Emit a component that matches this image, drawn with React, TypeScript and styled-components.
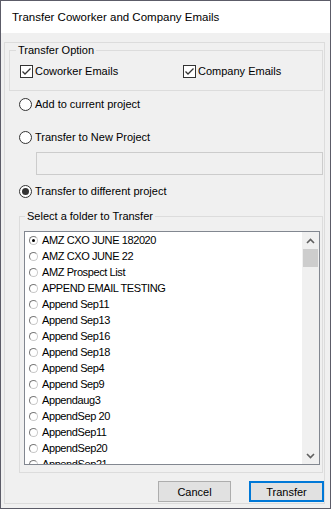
import styled, { createGlobalStyle } from "styled-components"

const folders = [
	"AMZ CXO JUNE 182020",
	"AMZ CXO JUNE 22",
	"AMZ Prospect List",
	"APPEND EMAIL TESTING",
	"Append Sep11",
	"Append Sep13",
	"Append Sep16",
	"Append Sep18",
	"Append Sep4",
	"Append Sep9",
	"Appendaug3",
	"AppendSep 20",
	"AppendSep11",
	"AppendSep20",
	"AppendSep21",
]

const CheckMark = () => (
	<svg width="11" height="11" viewBox="0 0 11 11">
		<path d="M1.5 5.5 L4 8 L9.5 2.5" fill="none" stroke="#333" strokeWidth="1.3" />
	</svg>
)

const Chevron = ({ down }: { down?: boolean }) => (
	<svg width="9" height="6" viewBox="0 0 9 6">
		<path
			d={down ? "M1 1 L4.5 4.5 L8 1" : "M1 5 L4.5 1.5 L8 5"}
			fill="none"
			stroke="#606060"
			strokeWidth="1.6"
		/>
	</svg>
)

export default function App() {
	return (
		<>
			<GlobalStyle />
			<Window>
				<TitleBar>Transfer Coworker and Company Emails</TitleBar>
				<Body>
					<Panel>
						<OptionGroup>
							<Legend $inset={6}>Transfer Option</Legend>
							<CheckRow>
								<CheckItem $width={163}>
									<CheckBox>
										<CheckMark />
									</CheckBox>
									<Label>Coworker Emails</Label>
								</CheckItem>
								<CheckItem>
									<CheckBox>
										<CheckMark />
									</CheckBox>
									<Label>Company Emails</Label>
								</CheckItem>
							</CheckRow>
						</OptionGroup>

						<RadioRow $top={7}>
							<RadioCircle />
							<Label>Add to current project</Label>
						</RadioRow>
						<RadioRow $top={20}>
							<RadioCircle />
							<Label>Transfer to New Project</Label>
						</RadioRow>
						<ProjectInput disabled />
						<RadioRow $top={10}>
							<RadioCircle $checked />
							<Label>Transfer to different project</Label>
						</RadioRow>

						<FolderGroup>
							<Legend $inset={5}>Select a folder to Transfer</Legend>
							<ListBox>
								<ListItems>
									{folders.map((name, i) => (
										<ListRow key={name}>
											<ItemRadio $checked={i === 0} />
											<ItemText>{name}</ItemText>
										</ListRow>
									))}
								</ListItems>
								<ScrollBar>
									<ScrollArrow>
										<Chevron />
									</ScrollArrow>
									<Thumb />
									<Track />
									<ScrollArrow>
										<Chevron down />
									</ScrollArrow>
								</ScrollBar>
							</ListBox>
						</FolderGroup>

						<ButtonRow>
							<Button $width={73}>Cancel</Button>
							<Button $width={75} $primary>
								Transfer
							</Button>
						</ButtonRow>
					</Panel>
				</Body>
			</Window>
		</>
	)
}

const GlobalStyle = createGlobalStyle`
	html, body {
		margin: 0;
		padding: 0;
		background: #ffffff;
	}
	* {
		box-sizing: border-box;
	}
`

const Window = styled.div`
	width: 331px;
	border: 1px solid #5c5c68;
	background: #f0f0f0;
	font-family: "Liberation Sans", Arial, sans-serif;
	font-size: 11px;
	color: #000;
`

const TitleBar = styled.div`
	height: 32px;
	background: #ffffff;
	display: flex;
	align-items: center;
	padding-left: 11px;
	font-size: 11.5px;
	color: #000;
`

const Body = styled.div`
	padding: 9px 5px 4px 3px;
`

const Panel = styled.div`
	border: 1px solid #dcdcdc;
	padding-bottom: 1px;
	display: flex;
	flex-direction: column;
`

const GroupBox = styled.fieldset`
	margin: 0;
	min-width: 0;
	border: 1px solid #dcdcdc;
`

const OptionGroup = styled(GroupBox)`
	margin: 0 1px 0 4px;
	padding: 7px 0 12px;
`

const FolderGroup = styled(GroupBox)`
	margin: 11px 0 0 14px;
	width: 304px;
	padding: 7px 0;
`

const Legend = styled.legend<{ $inset: number }>`
	margin-left: ${(p) => p.$inset}px;
	padding: 0 2px;
	height: 15px;
	line-height: 15px;
	font-size: 11px;
`

const CheckRow = styled.div`
	display: flex;
	height: 13px;
	padding-left: 10px;
`

const CheckItem = styled.div<{ $width?: number }>`
	display: flex;
	align-items: center;
	gap: 2px;
	width: ${(p) => (p.$width ? `${p.$width}px` : "auto")};
`

const CheckBox = styled.span`
	width: 13px;
	height: 13px;
	border: 1px solid #333;
	background: #fff;
	display: flex;
	align-items: center;
	justify-content: center;
	flex: none;
`

const Label = styled.span`
	line-height: 13px;
	white-space: nowrap;
`

const RadioRow = styled.div<{ $top: number }>`
	display: flex;
	align-items: center;
	gap: 3px;
	height: 13px;
	margin: ${(p) => p.$top}px 0 0 14px;
`

const RadioCircle = styled.span<{ $checked?: boolean }>`
	width: 13px;
	height: 13px;
	border-radius: 50%;
	border: 1px solid #333;
	background: #fff;
	flex: none;
	display: flex;
	align-items: center;
	justify-content: center;
	&::after {
		content: "";
		display: ${(p) => (p.$checked ? "block" : "none")};
		width: 7px;
		height: 7px;
		border-radius: 50%;
		background: #333;
	}
`

const ProjectInput = styled.input`
	margin: 8px 0 0 31px;
	width: 287px;
	height: 23px;
	border: 1px solid #cccccc;
	background: #f0f0f0;
	padding: 0;
	outline: none;
`

const ListBox = styled.div`
	width: 296px;
	height: 234px;
	margin-left: 4px;
	border: 1px solid #828790;
	background: #fff;
	display: flex;
	overflow: hidden;
`

const ListItems = styled.div`
	flex: 1;
	overflow: hidden;
`

const ListRow = styled.div`
	height: 16px;
	display: flex;
	align-items: center;
	padding-left: 4px;
	gap: 4px;
`

const ItemRadio = styled.span<{ $checked?: boolean }>`
	width: 9px;
	height: 9px;
	border-radius: 50%;
	border: 1px solid;
	border-color: #7a7a7a #c8c8c8 #c8c8c8 #7a7a7a;
	background: #fff;
	flex: none;
	display: flex;
	align-items: center;
	justify-content: center;
	&::after {
		content: "";
		display: ${(p) => (p.$checked ? "block" : "none")};
		width: 3px;
		height: 3px;
		border-radius: 50%;
		background: #000;
	}
`

const ItemText = styled.span`
	font-size: 11px;
	letter-spacing: -0.4px;
	white-space: nowrap;
`

const ScrollBar = styled.div`
	width: 17px;
	background: #f0f0f0;
	display: flex;
	flex-direction: column;
`

const ScrollArrow = styled.div`
	height: 17px;
	display: flex;
	align-items: center;
	justify-content: center;
	flex: none;
`

const Thumb = styled.div`
	height: 18px;
	margin: 0 1px;
	background: #cdcdcd;
	flex: none;
`

const Track = styled.div`
	flex: 1;
`

const ButtonRow = styled.div`
	display: flex;
	justify-content: flex-end;
	gap: 18px;
	margin-top: 8px;
`

const Button = styled.button<{ $width: number; $primary?: boolean }>`
	width: ${(p) => p.$width}px;
	height: 21px;
	padding: 0;
	background: #e1e1e1;
	border: ${(p) => (p.$primary ? "2px solid #0078d7" : "1px solid #adadad")};
	font-family: "Liberation Sans", Arial, sans-serif;
	font-size: 11px;
	color: #000;
`
